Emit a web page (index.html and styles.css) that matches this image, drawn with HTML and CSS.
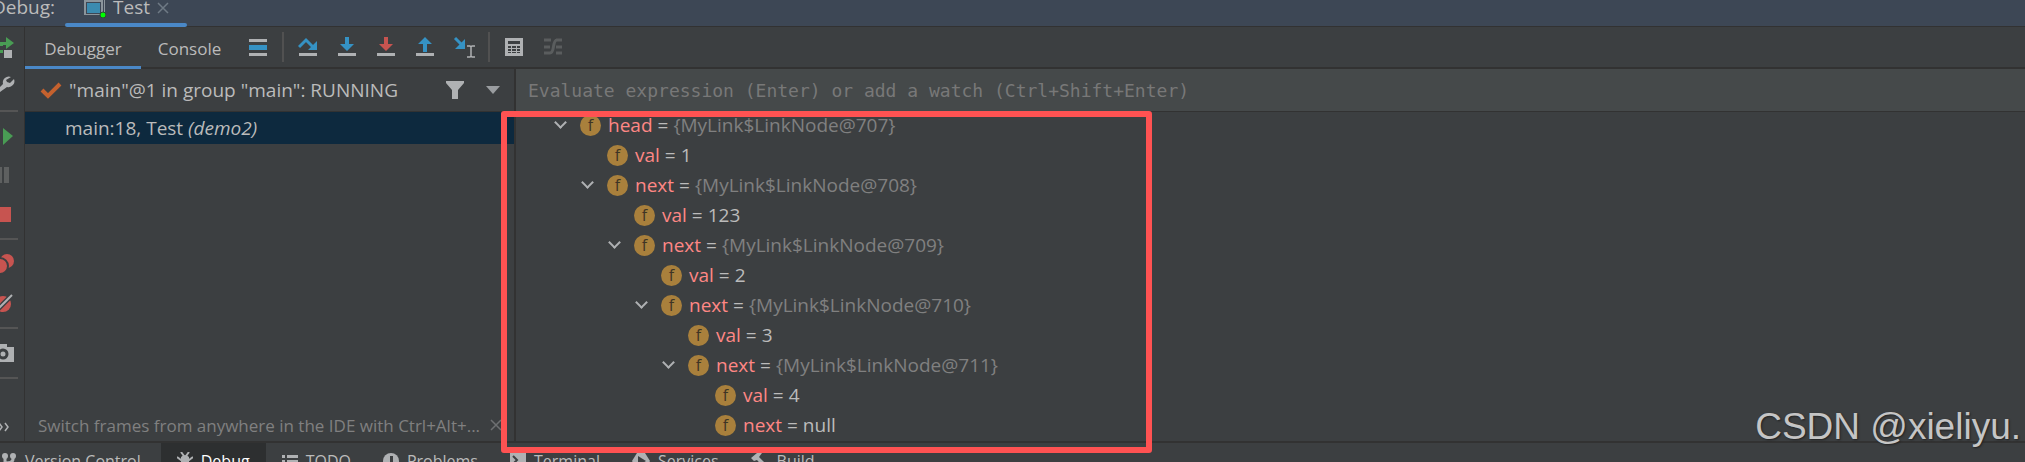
FILE: index.html
```html
<!DOCTYPE html>
<html lang="en">
<head>
    <meta charset="UTF-8">
    <meta name="viewport" content="width=device-width, initial-scale=1.0">
    <title>Debug - Test</title>
    <link rel="stylesheet" href="styles.css">
</head>
<body>
    <header class="title-bar">
        <span class="title-label">Debug:</span>
        <div class="session-tab">
            <svg width="22" height="18" viewBox="0 0 22 18"><path d="M0 0h19v15H0z" fill="#8b959c"/><path d="M2 2h15v12H2z" fill="#3d4755"/><path d="M3 3h13v10H3z" fill="#3b8bb0"/><path d="M20 0h1v12h-1z" fill="#8b959c"/><circle cx="19" cy="15" r="3" fill="#00ff00" stroke="#2b4a35"/></svg>
            <span>Test</span>
            <button class="icon-button close" aria-label="Close tab"><svg width="12" height="12" viewBox="0 0 12 12"><path d="M1 1l10 10M11 1L1 11" stroke="#6f7a85" stroke-width="1.5"/></svg></button>
        </div>
    </header>

    <div class="debug-window">
        <!-- Left action strip -->
        <aside class="side-bar">
            <button aria-label="Rerun"><svg width="24" height="24" viewBox="0 0 24 24"><path d="M0 7h6V2l8 6-8 6V10H3v1H0z" fill="#499c54"/><path d="M0 15h3v3H0z" fill="#499c54"/><path d="M4 15h8v8H4z" fill="#afb1b3"/></svg></button>
            <button aria-label="Settings"><svg width="24" height="24" viewBox="0 0 24 24"><path d="M11 3a6 6 0 0 0-8 7L0 13v5l7-5a6 6 0 0 0 7-8l-4 4-3-1-1-2z" fill="#afb1b3"/></svg></button>
            <hr>
            <button aria-label="Resume"><svg width="24" height="24" viewBox="0 0 24 24"><path d="M3 4l10 8-10 9z" fill="#499c54"/></svg></button>
            <button aria-label="Pause"><svg width="24" height="24" viewBox="0 0 24 24"><path d="M0 4h2v16H0zM4 4h5v16H4z" fill="#5e6060"/></svg></button>
            <button aria-label="Stop"><svg width="24" height="24" viewBox="0 0 24 24"><path d="M0 5h11v15H0z" fill="#c75450"/></svg></button>
            <hr>
            <button aria-label="View breakpoints"><svg width="24" height="24" viewBox="0 0 24 24"><circle cx="7" cy="9" r="7" fill="#c75450"/><circle cx="0" cy="14" r="8" fill="#c75450" stroke="#3c3f41" stroke-width="2"/></svg></button>
            <button aria-label="Mute breakpoints"><svg width="24" height="24" viewBox="0 0 24 24"><circle cx="3" cy="13" r="8" fill="#c75450"/><path d="M-2 18L12 4" stroke="#3c3f41" stroke-width="5"/><path d="M-2 18L12 4" stroke="#afb1b3" stroke-width="2"/></svg></button>
            <hr>
            <button aria-label="Thread dump"><svg width="24" height="24" viewBox="0 0 24 24"><path d="M0 3h7v3h7v15H0z" fill="#afb1b3"/><circle cx="3" cy="13" r="4" fill="#afb1b3" stroke="#3c3f41" stroke-width="3"/></svg></button>
            <hr>
            <button class="more" aria-label="More"><svg width="24" height="24" viewBox="0 0 24 24"><path d="M-1 8l3 4-3 4M5 8l3 4-3 4" fill="none" stroke="#afb1b3" stroke-width="1.5"/></svg></button>
        </aside>

        <main class="content">
            <div class="toolbar">
                <button class="tab active">Debugger</button>
                <button class="tab">Console</button>
                <button class="tool" aria-label="Layout"><svg width="20" height="20" viewBox="0 0 20 20"><path d="M1 2h18v3H1zM1 16h18v3H1z" fill="#afb1b3"/><path d="M1 8h18v5H1z" fill="#3592c4"/></svg></button>
                <span class="divider"></span>
                <button class="tool" aria-label="Step over"><svg width="20" height="20" viewBox="0 0 20 20"><path d="M1 10l7-7 8 8" fill="none" stroke="#3592c4" stroke-width="3"/><path d="M19 4v9h-9z" fill="#3592c4"/><path d="M1 16h18v3H1z" fill="#afb1b3"/></svg></button>
                <button class="tool" aria-label="Step into"><svg width="20" height="20" viewBox="0 0 20 20"><path d="M8 0h4v7h5l-7 7-7-7h5z" fill="#3592c4"/><path d="M1 16h18v3H1z" fill="#afb1b3"/></svg></button>
                <button class="tool" aria-label="Force step into"><svg width="20" height="20" viewBox="0 0 20 20"><path d="M8 0h4v7h5l-7 7-7-7h5z" fill="#c75450"/><path d="M1 16h18v3H1z" fill="#afb1b3"/></svg></button>
                <button class="tool" aria-label="Step out"><svg width="20" height="20" viewBox="0 0 20 20"><path d="M8 15h4V7h5l-7-7-7 7h5z" fill="#3592c4"/><path d="M1 16h18v3H1z" fill="#afb1b3"/></svg></button>
                <button class="tool" aria-label="Run to cursor"><svg width="22" height="22" viewBox="0 0 22 22"><path d="M2 2l7 7" stroke="#3592c4" stroke-width="3"/><path d="M12 3v10H2z" fill="#3592c4"/><path d="M14 10h3l1 1 1-1h3M18 11v9M14 21h3l1-1 1 1h3" fill="none" stroke="#afb1b3" stroke-width="1.5"/></svg></button>
                <span class="divider"></span>
                <button class="tool" aria-label="Evaluate expression"><svg width="20" height="20" viewBox="0 0 20 20"><path d="M1 1h18v18H1z" fill="#afb1b3"/><path d="M4 4h12v3H4zM4 9h3v2H4zM8 9h4v2H8zM13 9h3v2h-3zM4 12h3v2H4zM8 12h4v2H8zM13 12h3v2h-3zM4 15h3v1H4zM8 15h4v1H8zM13 15h3v1h-3z" fill="#3c3f41"/></svg></button>
                <button class="tool" aria-label="Trace stream"><svg width="20" height="20" viewBox="0 0 20 20"><path d="M1 3h7M1 10h6M1 16h7M13 3h6M13 10h6M13 16h6M7 16c5 0 2-13 7-13" fill="none" stroke="#5a5d5e" stroke-width="3"/></svg></button>
            </div>

            <div class="panes">
                <section class="frames">
                    <div class="thread">
                        <svg width="22" height="18" viewBox="0 0 22 18"><path d="M2 9l6 6L20 3" fill="none" stroke="#c4612e" stroke-width="4"/></svg>
                        <span class="thread-name">"main"@1 in group "main": RUNNING</span>
                        <button class="icon-button" aria-label="Filter"><svg width="18" height="18" viewBox="0 0 18 18"><path d="M0 0h18v2l-6 7v9H6V9L0 2z" fill="#afb1b3"/></svg></button>
                        <button class="icon-button" aria-label="Select thread"><svg width="14" height="8" viewBox="0 0 14 8"><path d="M0 0h14L7 8z" fill="#9a9da0"/></svg></button>
                    </div>
                    <div class="frame selected">main:18, Test <em>(demo2)</em></div>
                    <div class="hint">
                        <span>Switch frames from anywhere in the IDE with Ctrl+Alt+...</span>
                        <button class="icon-button" aria-label="Dismiss"><svg width="12" height="12" viewBox="0 0 12 12"><path d="M1 1l10 10M11 1L1 11" stroke="#6e7072" stroke-width="1.5"/></svg></button>
                    </div>
                </section>

                <section class="variables">
                    <input class="evaluate" type="text" aria-label="Evaluate expression" placeholder="Evaluate expression (Enter) or add a watch (Ctrl+Shift+Enter)">
                    <ul class="tree">
                        <li><div class="node open"><i>f</i><b>head</b> = <span>{MyLink$LinkNode@707}</span></div>
                            <ul>
                                <li><div class="node"><i>f</i><b>val</b> = 1</div></li>
                                <li><div class="node open"><i>f</i><b>next</b> = <span>{MyLink$LinkNode@708}</span></div>
                                    <ul>
                                        <li><div class="node"><i>f</i><b>val</b> = 123</div></li>
                                        <li><div class="node open"><i>f</i><b>next</b> = <span>{MyLink$LinkNode@709}</span></div>
                                            <ul>
                                                <li><div class="node"><i>f</i><b>val</b> = 2</div></li>
                                                <li><div class="node open"><i>f</i><b>next</b> = <span>{MyLink$LinkNode@710}</span></div>
                                                    <ul>
                                                        <li><div class="node"><i>f</i><b>val</b> = 3</div></li>
                                                        <li><div class="node open"><i>f</i><b>next</b> = <span>{MyLink$LinkNode@711}</span></div>
                                                            <ul>
                                                                <li><div class="node"><i>f</i><b>val</b> = 4</div></li>
                                                                <li><div class="node"><i>f</i><b>next</b> = null</div></li>
                                                            </ul>
                                                        </li>
                                                    </ul>
                                                </li>
                                            </ul>
                                        </li>
                                    </ul>
                                </li>
                            </ul>
                        </li>
                    </ul>
                    <div class="highlight"></div>
                </section>
            </div>
        </main>
    </div>

    <footer class="tool-windows">
        <button><svg width="16" height="18" viewBox="0 0 16 18"><path d="M4 4v12M12 4v3q0 4-8 4" fill="none" stroke="#afb1b3" stroke-width="3"/><circle cx="4" cy="4" r="3" fill="#afb1b3"/><circle cx="12" cy="4" r="3" fill="#afb1b3"/></svg>Version Control</button>
        <button class="current"><svg width="16" height="18" viewBox="0 0 16 18"><path d="M4 5q4-4 8 0v9q-4 5-8 0z" fill="#afb1b3"/><path d="M4 0l3 4M12 0L9 4M0 5l4 3h8l4-3M0 11h16M1 17l4-4M15 17l-4-4" fill="none" stroke="#afb1b3" stroke-width="2"/></svg>Debug</button>
        <button><svg width="16" height="18" viewBox="0 0 16 18"><path d="M0 3h3v3H0zM5 3h11v3H5zM0 8h3v3H0zM5 8h11v3H5zM0 13h3v3H0zM5 13h11v3H5z" fill="#afb1b3"/></svg>TODO</button>
        <button><svg width="16" height="18" viewBox="0 0 16 18"><circle cx="8" cy="9" r="8" fill="#afb1b3"/><path d="M7 4h3v6H7zM7 12h3v2H7z" fill="#3c3f41"/></svg>Problems</button>
        <button><svg width="16" height="18" viewBox="0 0 16 18"><path d="M0 1h16v16H0z" fill="#afb1b3"/><path d="M3 4l4 4-4 4M8 13h5" fill="none" stroke="#3c3f41" stroke-width="2"/></svg>Terminal</button>
        <button><svg width="18" height="18" viewBox="0 0 18 18"><path d="M5 1h8l5 8-5 8H5L0 9z" fill="#afb1b3"/><path d="M6 4l8 5-8 5z" fill="#3c3f41"/></svg>Services</button>
        <button><svg width="18" height="18" viewBox="0 0 18 18"><path d="M0 6l6-5h5L8 5l10 10-3 3L6 8 3 9z" fill="#afb1b3"/></svg>Build</button>
    </footer>

    <div class="watermark">CSDN @xieliyu.</div>
</body>
</html>
```

FILE: styles.css
```css
*,
*::before,
*::after {
    box-sizing: border-box;
}

body {
    margin: 0;
    height: 100vh;
    display: flex;
    flex-direction: column;
    overflow: hidden;
    position: relative;
    background-color: #3c3f41;
    color: #bbbbbb;
    font-family: "Open Sans", "Noto Sans", sans-serif;
    font-size: 19px;
    white-space: nowrap;
}

button {
    display: flex;
    align-items: center;
    padding: 0;
    border: none;
    background: none;
    color: inherit;
    font: inherit;
}

svg {
    display: block;
    flex: none;
}

ul {
    list-style: none;
    margin: 0;
    padding: 0;
}

/* Title bar */
.title-bar {
    display: flex;
    flex: none;
    height: 27px;
    background-color: #3d4755;
    border-bottom: 1px solid #323232;
    line-height: 15px;
}

.title-label {
    width: 65px;
    padding-right: 10px;
    display: flex;
    justify-content: flex-end;
}

.session-tab {
    position: relative;
    display: flex;
    gap: 7px;
    width: 122px;
    padding-left: 19px;
}

.session-tab::after {
    content: "";
    position: absolute;
    left: 0;
    right: 0;
    bottom: -1px;
    height: 4px;
    border-radius: 2px;
    background-color: #4a88c7;
}

.close {
    height: 16px;
}

.debug-window {
    flex: 1;
    display: flex;
    min-height: 0;
}

/* Side bar */
.side-bar {
    display: flex;
    flex-direction: column;
    flex: none;
    width: 25px;
    border-right: 1px solid #323232;
}

.side-bar button {
    height: 39px;
}

.side-bar hr {
    width: 18px;
    height: 2px;
    margin: 5px 0 4px;
    border: none;
    background-color: #555555;
}

.side-bar .more {
    height: 28px;
    margin-top: auto;
}

.content {
    flex: 1;
    display: flex;
    flex-direction: column;
    min-width: 0;
}

/* Toolbar */
.toolbar {
    display: flex;
    align-items: center;
    flex: none;
    height: 42px;
    border-bottom: 2px solid #323232;
}

.tab {
    align-self: stretch;
    justify-content: center;
    width: 97px;
    font-size: 17px;
    margin-bottom: -2px;
}

.tab.active {
    width: 116px;
    padding-top: 3px;
    border-bottom: 3px solid #4a88c7;
}

.tool {
    justify-content: center;
    width: 39px;
    height: 39px;
}

.divider {
    width: 2px;
    height: 30px;
    margin: 0 4px 0 5px;
    background-color: #515151;
}

/* Panes */
.panes {
    flex: 1;
    display: flex;
    min-height: 0;
}

.frames {
    display: flex;
    flex-direction: column;
    flex: none;
    width: 491px;
    border-right: 2px solid #323232;
}

.thread {
    display: flex;
    align-items: center;
    height: 43px;
    padding: 0 14px 0 15px;
    border-bottom: 1px solid #323232;
}

.thread-name {
    flex: 1;
    margin-left: 7px;
}

.thread .icon-button {
    margin-left: 22px;
}

.frame {
    height: 32px;
    padding-left: 40px;
    line-height: 32px;
}

.frame.selected {
    background-color: #0d293e;
}

.hint {
    display: flex;
    align-items: center;
    justify-content: space-between;
    height: 32px;
    margin-top: auto;
    padding: 0 12px 0 13px;
    color: #808080;
    font-size: 17px;
}

.variables {
    position: relative;
    flex: 1;
    min-width: 0;
}

.evaluate {
    display: block;
    width: 100%;
    height: 43px;
    padding: 0 12px;
    border: none;
    border-bottom: 1px solid #323232;
    outline: none;
    background-color: #45494a;
    color: #bbbbbb;
    font-family: "DejaVu Sans Mono", "Liberation Mono", monospace;
    font-size: 18px;
}

.evaluate::placeholder {
    color: #787878;
    opacity: 1;
}

/* Variables tree */
.tree {
    margin-top: -2px;
    padding-left: 36px;
}

.tree ul {
    padding-left: 27px;
}

.node {
    display: flex;
    align-items: center;
    height: 30px;
    gap: 5px;
    padding-left: 28px;
}

.node.open {
    padding-left: 0;
}

.node.open::before {
    content: "";
    width: 9px;
    height: 9px;
    margin: 0 10px 6px 4px;
    border-right: 2px solid #afb1b3;
    border-bottom: 2px solid #afb1b3;
    transform: rotate(45deg);
}

.node i {
    width: 21px;
    height: 21px;
    margin-right: 2px;
    border-radius: 50%;
    background-color: #a9803c;
    color: #3e3425;
    font-size: 16px;
    font-style: normal;
    line-height: 20px;
    text-align: center;
}

.node b {
    color: #ff8785;
    font-weight: normal;
}

.node span {
    color: #808080;
}

.highlight {
    position: absolute;
    top: 42px;
    left: -15px;
    width: 651px;
    height: 342px;
    border: 6px solid #ff5252;
    border-radius: 3px;
    z-index: 1;
}

/* Bottom bar */
.tool-windows {
    display: flex;
    flex: none;
    height: 21px;
    border-top: 2px solid #323232;
    font-size: 16px;
}

.tool-windows button {
    height: 36px;
    padding: 0 16px;
    gap: 8px;
}

.tool-windows button:first-child {
    padding: 0 20px 0 1px;
}

.tool-windows .current {
    background-color: #2d2f30;
    color: #ffffff;
}

.watermark {
    position: absolute;
    right: 4px;
    bottom: 12px;
    color: #c5c5c5;
    font-family: "Liberation Sans", sans-serif;
    font-size: 37px;
    line-height: 46px;
    text-shadow: 1px 1px 2px #222222;
}
```
